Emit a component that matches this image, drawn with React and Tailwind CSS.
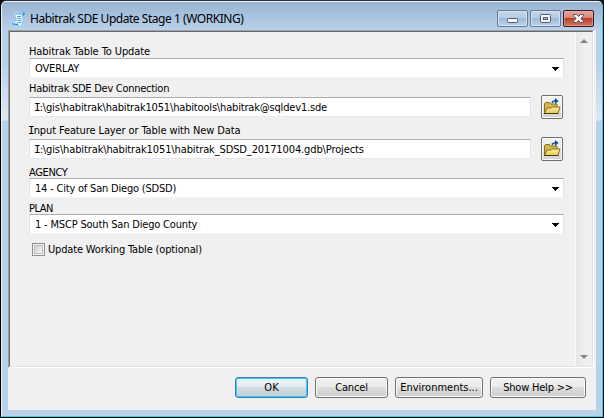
import React from "react";

const UI = "font-['DejaVu_Sans_Condensed','DejaVu_Sans',sans-serif] [font-stretch:condensed] text-[11px] leading-[14px] text-black whitespace-pre";

function Label({ children, className = "" }) {
  return (
    <div className="flex">
      <span className={`${UI} ${className}`}>{children}</span>
    </div>
  );
}

function SerifI() {
  return <span className="-ml-px font-['DejaVu_Sans_Mono',monospace] tracking-[-1px]">I</span>;
}

function Combo({ children, className = "", pad = "pl-[5px]" }) {
  return (
    <div className={`-mt-px flex h-5 w-[535px] items-center justify-between rounded-[1px] border border-[#e2e3ea] border-t-[#abadb3] border-b-[#f6f6f8] bg-white pr-1 ${pad}`}>
      <span className={`pt-px ${UI} ${className}`}>{children}</span>
      <svg width="7" height="4" viewBox="0 0 7 4" shapeRendering="crispEdges" className="mt-px">
        <path d="M0 0h7v1h-1v1h-1v1h-1v1h-1v-1h-1v-1h-1v-1h-1z" fill="#000" />
      </svg>
    </div>
  );
}

function FolderIcon() {
  return (
    <svg width="18" height="18" viewBox="0 0 18 18">
      <defs>
        <linearGradient id="folder" x1="0" y1="0" x2="0" y2="1">
          <stop offset="0" stopColor="#fdf0a0" />
          <stop offset="1" stopColor="#e6c65a" />
        </linearGradient>
      </defs>
      <path d="M1.500 15.500V5.500l1-1h4l1 1.500h6.500v4" fill="#d3b64e" stroke="#8d6f1c" />
      <path d="M1.500 15.500l2.500-5.500h4l1-1h8l-2 6.500z" fill="url(#folder)" stroke="#8d6f1c" />
      <path d="M1 15.500h14.500" stroke="#4b3a08" />
      <path d="M9.500 5V3h3" fill="none" stroke="#0b5394" strokeWidth="1.500" strokeDasharray="2 .800" />
      <path d="M12 0l3.500 3L12 6z" fill="#0b4f91" />
    </svg>
  );
}

function PathField({ children, className }) {
  return (
    <div className="-mt-px flex h-6 w-[535px] items-center justify-between">
      <div className="flex h-5 w-[502px] items-center rounded-[1px] border border-[#e2e3ea] border-t-[#abadb3] border-b-[#e3e9ef] bg-white pl-[5px]">
        <span className={`pt-px ${UI} ${className}`}>{children}</span>
      </div>
      <button className="mr-px flex h-6 w-[22px] items-center justify-center rounded-[2px] border border-[#707070] bg-linear-to-b from-[#f3f3f3] via-[#eaeaea] to-[#cfcfcf] shadow-[inset_0_0_0_1px_#fcfcfc]">
        <FolderIcon />
      </button>
    </div>
  );
}

function ScriptIcon() {
  return (
    <svg width="16" height="16" viewBox="0 0 16 16">
      <path d="M4 2Q4.500 .500 6.500.600L13.500 1.200Q15.500 1.800 14.800 3.700Q14 4.800 12.800 4.600Q11.800 6 12.700 8.500Q13.300 11 12 13.500Q10.700 15.300 8.500 15L2 13.800Q.300 13 .700 11.500Q1.300 10.300 3 10.500L6.200 10.800Q6.800 8.500 5.700 6.500Q5 4.800 5.500 3.800Q4 3.500 4 2z" fill="#e9f5fe" stroke="#8cc4ef" strokeWidth=".600" />
      <path d="M5 1.200L13.500 1.600Q11.500 2.500 11.800 4L5.500 3.200z" fill="#7dbcf0" />
      <path d="M13 1.800q1.300.300.900 1.600q-.700 1-1.600.300" fill="none" stroke="#1475c9" strokeWidth="1.300" />
      <path d="M7 5.500h4M7.200 7.500h4M7.500 9.500h4M7.600 11.500h4" stroke="#4ba0e0" strokeWidth="1" />
      <path d="M2 11.600l5.500.700q.500 1.800 2 2.200L2.500 13.400q-1-.800-.500-1.800z" fill="#2583d5" />
      <path d="M3 12l4 .500" stroke="#d8efff" strokeWidth=".800" />
    </svg>
  );
}

function CaptionButton({ kind }) {
  const close = kind === "close";
  return (
    <button
      className={
        close
          ? "flex h-[17px] w-[31px] items-center justify-center rounded-[2px] border border-[#431422] bg-[linear-gradient(to_bottom,#e5a69c_0%,#d58576_48%,#bb402a_50%,#d4745c_100%)] shadow-[inset_0_0_0_1px_#e9b6ad80]"
          : "flex h-[17px] w-[31px] items-center justify-center rounded-[2px] border border-[#667a96] bg-[linear-gradient(to_bottom,#c3d6ea_0%,#b6cce3_48%,#9db9d6_50%,#bdd4ec_100%)] shadow-[inset_0_0_0_1px_#d5e3f1]"
      }
    >
      {kind === "min" && (
        <svg width="13" height="11" viewBox="0 0 13 11">
          <rect x="1.500" y="5.500" width="10" height="4" rx="1" fill="#f7f7f7" stroke="#535666" />
        </svg>
      )}
      {kind === "max" && (
        <svg width="13" height="11" viewBox="0 0 13 11">
          <rect x="1.500" y="1.500" width="10" height="8" rx="1" fill="#f7f7f7" stroke="#535666" />
          <rect x="4.500" y="4.500" width="4" height="2" fill="#aac4df" stroke="#535666" />
        </svg>
      )}
      {close && (
        <svg width="13" height="11" viewBox="0 0 13 11">
          <path d="M1.500 1.500h3l2 2 2-2h3v1.500L8.800 5.500l2.700 2.500v1.500h-3l-2-2-2 2h-3V8l2.700-2.500L1.500 3z" fill="#f7f7f7" stroke="#535666" strokeLinejoin="round" />
        </svg>
      )}
    </button>
  );
}

function Button({ children, width, primary, className = "" }) {
  return (
    <button
      className={`flex h-[21px] items-center justify-center rounded-[3px] border ${width} ${
        primary
          ? "border-[#3c7fb1] bg-[linear-gradient(to_bottom,#eef3f6_0%,#e2eaee_48%,#d0dbe1_50%,#c2cfd6_100%)] shadow-[inset_0_0_0_1px_#35cdf5]"
          : "border-[#707070] bg-[linear-gradient(to_bottom,#f2f2f2_0%,#ebebeb_48%,#dddddd_50%,#cfcfcf_100%)] shadow-[inset_0_0_0_1px_#fafafa]"
      }`}
    >
      <span className={`pt-px ${UI} ${className}`}>{children}</span>
    </button>
  );
}

function ScrollBar() {
  return (
    <div className="flex w-[17px] flex-col items-center justify-between border-l border-[#f9f9f9] bg-linear-to-r from-[#e6e6e6] via-[#efefef] to-[#f0f0f0] pt-[7px] pb-[7px]">
      <svg width="8" height="4" viewBox="0 0 8 4"><path d="M0 4L4 0L8 4z" fill="#858585" /></svg>
      <svg width="8" height="4" viewBox="0 0 8 4"><path d="M0 0L4 4L8 0z" fill="#858585" /></svg>
    </div>
  );
}

export default function App() {
  return (
    <div className="h-[418px] w-[604px] overflow-hidden bg-[#101010]">
      <div className="flex h-[418px] w-[604px] flex-col rounded-t-[6px] border border-black border-t-[#2a2b33] bg-black">
        <div className="flex h-[416px] w-[602px] flex-col rounded-t-[5px] border border-t-[#f2f6fa] border-r-[#32cdf0] border-b-[#32cdf0] border-l-[#e9f3fa] bg-[linear-gradient(to_bottom,#98b4d2_0px,#b9d1ea_28px,#b9d1ea_60px,#dce8f6_118px,#b9d1ea_119px)] px-1.5 pb-1.5">
          <header className="flex h-7 shrink-0 items-start justify-between pr-[2px] pl-[2px]">
            <div className="flex items-center gap-[4px] pt-[7px]">
              <ScriptIcon />
              <span className="font-['Noto_Sans',sans-serif] text-[12px] leading-[20px] tracking-[-0.46px] whitespace-pre text-black">
                Habitrak SDE Update Stage 1 (WORKING)
              </span>
            </div>
            <div className="flex gap-0.5 pt-2">
              <CaptionButton kind="min" />
              <CaptionButton kind="max" />
              <CaptionButton kind="close" />
            </div>
          </header>

          <main className="flex h-[380px] w-[588px] shrink-0 flex-col bg-[#f0f0f0]">
            <div className="flex h-[338px] w-[586px] border border-t-[#a0a0a0] border-r-white border-b-white border-l-[#a0a0a0]">
              <div className="flex w-full justify-between border border-t-[#696969] border-r-[#e3e3e3] border-b-[#e3e3e3] border-l-[#696969]">
                <div className="flex flex-col pt-[13px] pl-[19px]">
                  <Label className="tracking-[-0.09px]">Habitrak Table To Update</Label>
                  <Combo className="tracking-[-0.14px]">OVERLAY</Combo>
                  <div className="h-1" />
                  <Label className="tracking-[-0.27px]">Habitrak SDE Dev Connection</Label>
                  <PathField className="tracking-[-0.17px]">
                    <SerifI />{":\\gis\\habitrak\\habitrak1051\\habitools\\habitrak@sqldev1.sde"}
                  </PathField>
                  <div className="h-[5px]" />
                  <Label className="tracking-[-0.11px]">
                    <SerifI />nput Feature Layer or Table with New Data
                  </Label>
                  <PathField className="tracking-[-0.12px]">
                    <SerifI />{":\\gis\\habitrak\\habitrak1051\\habitrak_SDSD_20171004.gdb\\Projects"}
                  </PathField>
                  <div className="h-[4px]" />
                  <Label className="pt-px -mb-px tracking-[-0.35px]">AGENCY</Label>
                  <Combo pad="pl-[5px]" className="tracking-[-0.2px]">14 - City of San Diego (SDSD)</Combo>
                  <div className="h-[3px]" />
                  <Label className="pt-px -mb-px tracking-[-0.5px]">PLAN</Label>
                  <Combo pad="pl-[5px]" className="tracking-[-0.18px]">1 - MSCP South San Diego County</Combo>
                  <div className="flex items-center gap-[3px] pt-[9px] pl-[3px]">
                    <div className="mb-px flex h-[13px] w-[13px] items-center justify-center border border-[#8e8f8f] bg-[#f4f4f4]">
                      <div className="h-[9px] w-[9px] border border-[#b9bfc5] bg-linear-to-br from-[#cfd3d8] to-[#f3f3f3]" />
                    </div>
                    <span className={`${UI} tracking-[-0.16px]`}>Update Working Table (optional)</span>
                  </div>
                </div>
                <ScrollBar />
              </div>
            </div>
            <footer className="flex justify-end gap-[7px] pt-[9px] pr-[10px]">
              <Button width="w-[73px]" primary>OK</Button>
              <Button width="w-[73px]" className="tracking-[-0.15px]">Cancel</Button>
              <Button width="w-[88px]">Environments...</Button>
              <Button width="w-[96px]" className="tracking-[-0.2px]">Show Help &gt;&gt;</Button>
            </footer>
          </main>
        </div>
      </div>
    </div>
  );
}
